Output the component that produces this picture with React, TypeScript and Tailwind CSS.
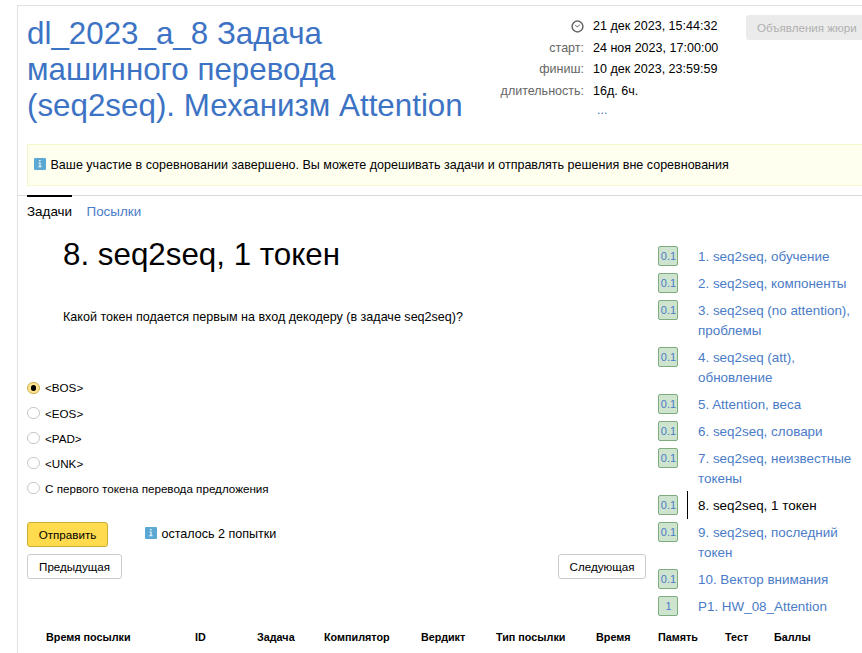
const problems = [
  { score: '0.1', lines: ['1. seq2seq, обучение'] },
  { score: '0.1', lines: ['2. seq2seq, компоненты'] },
  { score: '0.1', lines: ['3. seq2seq (no attention),', 'проблемы'] },
  { score: '0.1', lines: ['4. seq2seq (att),', 'обновление'] },
  { score: '0.1', lines: ['5. Attention, веса'] },
  { score: '0.1', lines: ['6. seq2seq, словари'] },
  { score: '0.1', lines: ['7. seq2seq, неизвестные', 'токены'] },
  { score: '0.1', lines: ['8. seq2seq, 1 токен'], active: true },
  { score: '0.1', lines: ['9. seq2seq, последний', 'токен'] },
  { score: '0.1', lines: ['10. Вектор внимания'] },
  { score: '1', lines: ['P1. HW_08_Attention'] },
];

const answers = [
  { label: '<BOS>', checked: true },
  { label: '<EOS>' },
  { label: '<PAD>' },
  { label: '<UNK>' },
  { label: 'С первого токена перевода предложения' },
];

const columns = [
  { title: 'Время посылки', width: 'w-[149px]' },
  { title: 'ID', width: 'w-[62px]' },
  { title: 'Задача', width: 'w-[67px]' },
  { title: 'Компилятор', width: 'w-[97px]' },
  { title: 'Вердикт', width: 'w-[75px]' },
  { title: 'Тип посылки', width: 'w-[100px]' },
  { title: 'Время', width: 'w-[62px]' },
  { title: 'Память', width: 'w-[67px]' },
  { title: 'Тест', width: 'w-[49px]' },
  { title: 'Баллы', width: 'w-[37px]' },
];

function InfoIcon() {
  return (
    <svg width="12" height="12" viewBox="0 0 12 12" className="shrink-0">
      <rect width="12" height="12" rx="1" fill="#5ba8d2" />
      <path d="M5 2h1.6v1.3H5zM4.4 4.4h2.2v3.9h1v.9H4.3v-.9h1.1V5.3h-1z" fill="#eef7fb" />
    </svg>
  );
}

function ClockIcon() {
  return (
    <svg width="13" height="13" viewBox="0 0 13 13" fill="none" stroke="#666" className="shrink-0">
      <circle cx="6.5" cy="6.5" r="5.4" strokeWidth="1.5" />
      <path d="M4.2 5.2l2 1.6 2.6-2" strokeWidth="1" />
    </svg>
  );
}

function Header() {
  return (
    <header className="flex h-[138px] pl-[9px]">
      <h1 className="w-[456px] shrink-0 pt-[10px] text-[31.34px] leading-[36px] text-[#3d73c4]">
        dl_2023_a_8 Задача
        <br />
        машинного перевода
        <br />
        (seq2seq). Механизм Attention
      </h1>
      <div className="flex w-[101px] shrink-0 flex-col items-end pt-[9px] text-[12.52px] text-[#666]">
        <div className="flex h-[22px] items-center">
          <ClockIcon />
        </div>
        <div className="h-[21px] leading-[22px]">старт:</div>
        <div className="h-[22px] leading-[22px]">финиш:</div>
        <div className="h-[22px] leading-[22px]">длительность:</div>
      </div>
      <div className="w-[162px] shrink-0 whitespace-nowrap pt-[9px] pl-[9px] text-[12.55px]">
        <div className="h-[22px] leading-[22px]">21 дек 2023, 15:44:32</div>
        <div className="h-[21px] leading-[22px]">24 ноя 2023, 17:00:00</div>
        <div className="h-[22px] leading-[22px]">10 дек 2023, 23:59:59</div>
        <div className="h-[22px] leading-[22px]">16д. 6ч.</div>
        <div className="-mt-[3px] pl-1 leading-[22px] text-[#3d73c4]">...</div>
      </div>
      <button className="mt-[9px] h-[25px] w-[130px] shrink-0 rounded-[3px] bg-[#ebebeb] pt-px pl-[11px] text-left text-[11.6px] text-[#b0b0b0]">
        Объявления жюри
      </button>
    </header>
  );
}

function Sidebar() {
  return (
    <ul className="w-[204px] shrink-0 pt-[13px] text-[13.42px] leading-[20px]">
      {problems.map((p) => (
        <li key={p.lines[0]} className="flex">
          <div className="w-[29px] pt-[3px]">
            <div className="h-5 w-5 rounded-[2px] border border-[#7fad80] bg-[#cfe4cf] pl-px text-center text-[11px] leading-[18px] text-[#4a7cc7]">
              {p.score}
            </div>
          </div>
          <div
            className={
              p.active
                ? '-mt-px whitespace-nowrap border-l border-black pt-[5px] pb-[3px] pl-[10px] text-black'
                : 'whitespace-nowrap border-l border-transparent pt-[4px] pb-[3px] pl-[10px] text-[#4a7cc7]'
            }
          >
            {p.lines.map((line) => (
              <div key={line}>{line}</div>
            ))}
          </div>
        </li>
      ))}
    </ul>
  );
}

function Answers() {
  return (
    <div className="flex flex-col pt-[50px] text-[11.65px]">
      {answers.map((a) => (
        <label key={a.label} className="flex h-[25.2px] items-center gap-[5px] leading-4">
          <span
            className={
              a.checked
                ? 'mb-[2px] flex h-[12px] w-[13px] items-center justify-center rounded-full border border-[#c9ae51] bg-[#ffe592]'
                : 'mb-[2px] h-[12px] w-[13px] rounded-full border border-[#c8c8c8] bg-white'
            }
          >
            {a.checked && <span className="h-[6px] w-[5px] rounded-full bg-black" />}
          </span>
          <span className={a.checked ? 'pb-[2px]' : ''}>{a.label}</span>
        </label>
      ))}
    </div>
  );
}

export default function App() {
  return (
    <div className="h-[653px] w-[862px] overflow-hidden bg-white pt-[5px] pl-[17px] font-['Liberation_Sans',sans-serif] text-black">
      <div className="h-[648px] border-t border-l border-[#e2e2e2]">
        <Header />
        <div className="ml-[9px] flex h-[42px] items-center gap-[4.5px] border-y border-l border-[#f7f5cb] bg-[#fffff0] pl-[6px] text-[12.54px]">
          <div className="pb-[2px]">
            <InfoIcon />
          </div>
          <span className="whitespace-nowrap">
            Ваше участие в соревновании завершено. Вы можете дорешивать задачи и отправлять решения вне соревнования
          </span>
        </div>
        <nav className="mt-[9px] flex h-[35px] gap-[14.5px] border-t border-[#d9d9d9] pl-[9px] text-[13.42px] leading-[20px]">
          <div className="-mt-px border-t-2 border-black pt-[5px]">Задачи</div>
          <div className="pt-[6px] text-[#4a7cc7]">Посылки</div>
        </nav>
        <main className="flex h-[395px]">
          <section className="w-[640px] shrink-0 pl-[9px]">
            <h2 className="pt-[7px] pl-[36px] text-[31.34px] leading-[36px]">8. seq2seq, 1 токен</h2>
            <p className="pt-[35px] pl-[36px] text-[12.55px] leading-[18px]">
              Какой токен подается первым на вход декодеру (в задаче seq2seq)?
            </p>
            <Answers />
            <div className="mt-[20px] flex">
              <button className="h-[25px] w-[81px] rounded-[3px] border border-[#c9ae35] bg-[#ffdb4d] pt-px text-[11.6px]">
                Отправить
              </button>
              <div className="ml-[36.5px] flex h-[25px] items-center gap-[5px] text-[12.55px]">
                <div className="pb-[3px]">
                  <InfoIcon />
                </div>
                <span>осталось 2 попытки</span>
              </div>
            </div>
            <div className="mt-[7px] flex w-[619px] justify-between text-[11.6px]">
              <button className="h-[25px] w-[95px] rounded-[3px] border border-[#cccccc] pt-px">Предыдущая</button>
              <button className="h-[25px] w-[88px] rounded-[3px] border border-[#cccccc] pt-px">Следующая</button>
            </div>
          </section>
          <Sidebar />
        </main>
        <div className="mt-[4px] flex pl-[28px] text-[10.8px] leading-[16px] font-bold whitespace-nowrap">
          {columns.map((c) => (
            <div key={c.title} className={c.width}>
              {c.title}
            </div>
          ))}
        </div>
      </div>
    </div>
  );
}
